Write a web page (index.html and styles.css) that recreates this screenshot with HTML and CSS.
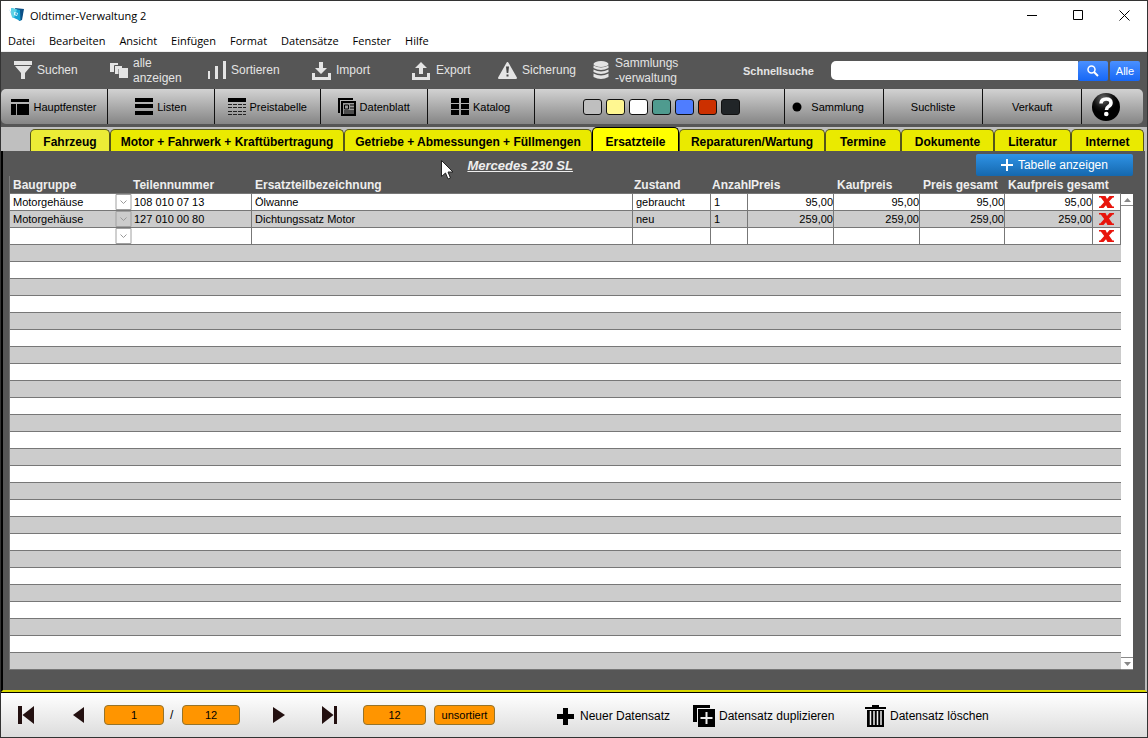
FILE: index.html
```html
<!DOCTYPE html>
<html lang="de">
<head>
<meta charset="utf-8">
<title>Oldtimer-Verwaltung 2</title>
<link rel="stylesheet" href="styles.css">
</head>
<body>
<svg width="0" height="0" class="defs" aria-hidden="true">
  <symbol id="x" viewBox="0 0 15 12"><path d="M0 0h6.500l1.500 3L10.500 0H15v1.500h-1.200L10 5.500l3.500 5H15V12H8.500L7 9.200 4.500 12H0v-1.500h1.200L5.200 6 1.800 1.500H0z" fill="#e8150c"/></symbol>
  <symbol id="chev" viewBox="0 0 16 16"><path d="M.5.500h15v15H.5z" fill="none" stroke="#a0a0a0"/><path d="M5 6.500l3 3 3-3" fill="none" stroke="#999"/></symbol>
</svg>
<div class="window">
  <header class="titlebar">
    <svg class="appicon" viewBox="0 0 16 16" width="16" height="16"><path d="M6 1l9 1-2 11-3 1z" fill="#0b4f86"/><path d="M0 2l4 9 1-1z" fill="#7ccbe8"/><path d="M2 1l9 2 .5 11L3 10z" fill="#16a4d4"/><path d="M2 1l6 1.500-3 8.500-2-1z" fill="#5bd3e6"/><path d="M5 5l4 1-1 3-3-1z" fill="#d8fbff"/><path d="M6.500 6l1.500.5-.5 1.500-1-.5z" fill="#1477b5"/></svg>
    <h1>Oldtimer-Verwaltung 2</h1>
    <button aria-label="Minimieren"><svg width="11" height="11"><path d="M0 5.500h10" stroke="#000"/></svg></button>
    <button aria-label="Maximieren"><svg width="11" height="11"><path d="M.5.500h9v9h-9z" fill="none" stroke="#000"/></svg></button>
    <button aria-label="Schließen"><svg width="11" height="11"><path d="M.5.500l10 10m0-10l-10 10" stroke="#000"/></svg></button>
  </header>
  <nav class="menubar">
    <button>Datei</button><button>Bearbeiten</button><button>Ansicht</button><button>Einfügen</button><button>Format</button><button>Datensätze</button><button>Fenster</button><button>Hilfe</button>
  </nav>

  <div class="app">
    <div class="toolbar">
      <button><svg width="18" height="19"><path d="M0 0h18v4H0zM1 5h16l-6 7v6H7v-6z" fill="#e4e4e4"/></svg><span>Suchen</span></button>
      <button><svg width="18" height="17"><path d="M0 1h8v3H4v6H0z" fill="#e4e4e4"/><path d="M4.500 3.500h8V7H9v5.500H4.500z" fill="#e4e4e4" stroke="#565656"/><path d="M9 6h9v10H9z" fill="#e4e4e4"/></svg><span>alle<br>anzeigen</span></button>
      <button><svg width="19" height="19"><path d="M1 10h2v8H1zM8 5h3v13H8zM16 0h3v18h-3z" fill="#e4e4e4"/></svg><span>Sortieren</span></button>
      <button><svg width="19" height="18"><path d="M0 11h3v4h13v-4h3v7H0zM7 0h4v6h4l-6 6-6-6h4z" fill="#e4e4e4"/></svg><span>Import</span></button>
      <button><svg width="19" height="18"><path d="M0 11h3v4h12v-4h3v7H0zM7 12V6H3l6-6 6 6h-4v6z" fill="#e4e4e4"/></svg><span>Export</span></button>
      <button><svg width="19" height="17"><path d="M9.500 1l8.500 15H1z" fill="#e4e4e4" stroke="#e4e4e4" stroke-width="2" stroke-linejoin="round"/><path d="M8 4.500h3l-.7 6.500H8.700zM8.500 12.500h2v2h-2z" fill="#454545"/></svg><span>Sicherung</span></button>
      <button class="db"><svg width="18" height="19"><g fill="#e4e4e4"><ellipse cx="9" cy="3" rx="7.500" ry="3"/><path d="M1.500 4.500q7.500 4 15 0v2.500q-7.500 4-15 0zM1.500 8.500q7.500 4 15 0V11q-7.500 4-15 0zM1.500 12.500q7.500 4 15 0v3.500q-7.500 4-15 0z"/></g></svg><span>Sammlungs<br>-verwaltung</span></button>
      <label for="quick">Schnellsuche</label>
      <form class="search">
        <input id="quick" type="text">
        <button type="button" class="blue" aria-label="Suchen"><svg width="12" height="12"><circle cx="4.500" cy="4.500" r="3.500" fill="none" stroke="#fff" stroke-width="1.500"/><path d="M7 7l4 4" stroke="#fff" stroke-width="2"/></svg></button>
        <button type="button" class="blue all">Alle</button>
      </form>
    </div>

    <div class="navbar">
      <button><svg width="18" height="16"><path d="M0 0h18v3H0zM0 5h5v11H0zM6 5h12v11H6z"/></svg>Hauptfenster</button>
      <button><svg width="18" height="17"><path d="M0 0h18v4H0zM0 6h18v4H0zM0 13h18v4H0z"/></svg>Listen</button>
      <button><svg width="18" height="18"><path d="M0 0h18v4H0z"/><path d="M0 6.500h18M0 9.500h18M0 13.500h18M0 16.500h18" stroke="#222" stroke-dasharray="4 1"/></svg>Preistabelle</button>
      <button><svg width="18" height="18"><path d="M1 15V1h14" fill="none" stroke="#000" stroke-width="2"/><path d="M4 4h13v13H4z" fill="#999" stroke="#000" stroke-width="2"/><path d="M6.500 7h4v4h-4zM12 7h4M12 10h4M6 13h10M6 15h10" fill="none" stroke="#000"/></svg>Datenblatt</button>
      <button><svg width="18" height="17"><path d="M0 0h8v5H0zM10 0h8v5h-8zM0 6h8v5H0zM10 6h8v5h-8zM0 12h8v5H0zM10 12h8v5h-8z"/></svg>Katalog</button>
      <div class="swatches">
        <button class="c1" aria-label="Grau"></button><button class="c2" aria-label="Gelb"></button><button class="c3" aria-label="Weiß"></button><button class="c4" aria-label="Grün"></button><button class="c5" aria-label="Blau"></button><button class="c6" aria-label="Rot"></button><button class="c7" aria-label="Schwarz"></button>
      </div>
      <button class="state"><svg width="10" height="10"><circle cx="5" cy="5" r="4.500"/></svg>Sammlung</button>
      <button>Suchliste</button>
      <button>Verkauft</button>
      <button class="help" aria-label="Hilfe"><svg width="28" height="28"><defs><radialGradient id="ball" cx=".4" cy=".2"><stop offset="0" stop-color="#666"/><stop offset=".7" stop-color="#111"/><stop offset="1" stop-color="#000"/></radialGradient></defs><circle cx="14" cy="14" r="14" fill="url(#ball)"/><path d="M9 10.500q.3-4.500 5.200-4.500 4.800 0 4.800 3.800 0 2.200-2.500 3.700-2 1.200-2 3.500" fill="none" stroke="#fff" stroke-width="3.600"/><circle cx="14.300" cy="21" r="2.300" fill="#fff"/></svg></button>
    </div>

    <div class="tabs" role="tablist">
      <button role="tab" class="first">Fahrzeug</button><button role="tab">Motor + Fahrwerk + Kraftübertragung</button><button role="tab">Getriebe + Abmessungen + Füllmengen</button><button role="tab" class="active" aria-selected="true">Ersatzteile</button><button role="tab">Reparaturen/Wartung</button><button role="tab">Termine</button><button role="tab">Dokumente</button><button role="tab">Literatur</button><button role="tab">Internet</button>
    </div>

    <main class="panel">
      <div class="heading">
        <h2>Mercedes 230 SL</h2>
        <button class="show"><svg width="12" height="12"><path d="M6 0v12M0 6h12" stroke="#fff" stroke-width="2"/></svg>Tabelle anzeigen</button>
      </div>
      <div class="grid">
        <table>
          <colgroup><col class="w-group"><col class="w-num"><col><col class="w-cond"><col class="w-qty"><col class="w-price"><col class="w-price"><col class="w-total"><col class="w-ktotal"><col class="w-del"></colgroup>
          <thead><tr><th>Baugruppe</th><th>Teilennummer</th><th>Ersatzteilbezeichnung</th><th>Zustand</th><th>Anzahl</th><th>Preis</th><th>Kaufpreis</th><th>Preis gesamt</th><th>Kaufpreis gesamt</th><th></th></tr></thead>
          <tbody>
            <tr><td><div class="combo"><select aria-label="Baugruppe"><option>Motorgehäuse</option></select><svg><use href="#chev"/></svg></div></td><td>108 010 07 13</td><td>Ölwanne</td><td>gebraucht</td><td>1</td><td class="n">95,00</td><td class="n">95,00</td><td class="n">95,00</td><td class="n">95,00</td><td><button aria-label="Zeile löschen"><svg><use href="#x"/></svg></button></td></tr>
            <tr><td><div class="combo"><select aria-label="Baugruppe"><option>Motorgehäuse</option></select><svg><use href="#chev"/></svg></div></td><td>127 010 00 80</td><td>Dichtungssatz Motor</td><td>neu</td><td>1</td><td class="n">259,00</td><td class="n">259,00</td><td class="n">259,00</td><td class="n">259,00</td><td><button aria-label="Zeile löschen"><svg><use href="#x"/></svg></button></td></tr>
            <tr><td><div class="combo"><select aria-label="Baugruppe"><option></option></select><svg><use href="#chev"/></svg></div></td><td></td><td></td><td></td><td></td><td></td><td></td><td></td><td></td><td><button aria-label="Zeile löschen"><svg><use href="#x"/></svg></button></td></tr>
            <tr><td colspan="10"></td></tr><tr><td colspan="10"></td></tr><tr><td colspan="10"></td></tr><tr><td colspan="10"></td></tr><tr><td colspan="10"></td></tr>
            <tr><td colspan="10"></td></tr><tr><td colspan="10"></td></tr><tr><td colspan="10"></td></tr><tr><td colspan="10"></td></tr><tr><td colspan="10"></td></tr>
            <tr><td colspan="10"></td></tr><tr><td colspan="10"></td></tr><tr><td colspan="10"></td></tr><tr><td colspan="10"></td></tr><tr><td colspan="10"></td></tr>
            <tr><td colspan="10"></td></tr><tr><td colspan="10"></td></tr><tr><td colspan="10"></td></tr><tr><td colspan="10"></td></tr><tr><td colspan="10"></td></tr>
            <tr><td colspan="10"></td></tr><tr><td colspan="10"></td></tr><tr><td colspan="10"></td></tr><tr><td colspan="10"></td></tr><tr><td colspan="10"></td></tr>
          </tbody>
        </table>
        <div class="scroll">
          <button aria-label="Nach oben"><svg width="7" height="4"><path d="M0 4l3.500-4L7 4z" fill="#888"/></svg></button>
          <button aria-label="Nach unten"><svg width="7" height="4"><path d="M0 0h7L3.500 4z" fill="#888"/></svg></button>
        </div>
      </div>
    </main>
  </div>

  <footer class="footer">
    <button aria-label="Erster"><svg width="17" height="18"><path d="M0 0h4v18H0zM16 0v18L4.500 9z" fill="#231010"/></svg></button>
    <button aria-label="Zurück"><svg width="12" height="18"><path d="M11 1v16L0 9z" fill="#231010"/></svg></button>
    <input class="pill" type="text" value="1" aria-label="Datensatz">
    <span class="slash">/</span>
    <output class="pill">12</output>
    <button class="next" aria-label="Weiter"><svg width="12" height="18"><path d="M0 1v16l12-8z" fill="#231010"/></svg></button>
    <button aria-label="Letzter"><svg width="17" height="18"><path d="M13 0h3v18h-3zM1 0v18l11.500-9z" fill="#231010"/></svg></button>
    <output class="pill">12</output>
    <output class="pill sort">unsortiert</output>
    <button class="act"><svg width="17" height="17"><path d="M6 0h5v6h6v5h-6v6H6v-6H0V6h6z"/></svg><span>Neuer Datensatz</span></button>
    <button class="act"><svg width="22" height="22"><path d="M0 0h17v3H4v14H0z"/><path d="M5 4h17v18H5z"/><path d="M13.500 7v12M7.500 13h12" stroke="#eee" stroke-width="2"/></svg><span>Datensatz duplizieren</span></button>
    <button class="act"><svg width="21" height="22"><path d="M0 2h7V0h7v2h7v2H0zM2 5h17v17H2z"/><path d="M5.500 6v14M9 6v14M12.500 6v14M16 6v14" stroke="#eee" stroke-width="1.500"/></svg><span>Datensatz löschen</span></button>
  </footer>
  <svg class="cursor" width="13" height="20"><path d="M.5.500v16l4-3.500 2.500 6 2.500-1-2.500-6h5z" fill="#fff" stroke="#222"/></svg>
</div>
</body>
</html>
```

FILE: styles.css
```css
* { box-sizing: border-box; }
body { margin: 0; background: #fff; font-family: "Liberation Sans", Arial, sans-serif; font-size: 12px; color: #000; }
button, input, select { font: inherit; color: inherit; margin: 0; padding: 0; border: 0; background: none; }
button { display: flex; align-items: center; text-align: left; white-space: nowrap; }
svg { display: block; flex: none; }
.defs { position: absolute; }
.window { position: relative; min-height: 100vh; display: flex; flex-direction: column; border: 1px solid #333; }

.titlebar { display: flex; align-items: center; height: 28px; padding-left: 8px; font-family: "Open Sans", "Noto Sans", sans-serif; }
.titlebar h1 { flex: 1; margin: 0 0 0 5px; font-size: 11px; font-weight: 400; }
.titlebar button { width: 46px; height: 28px; justify-content: center; }
.menubar { display: flex; gap: 14px; height: 23px; padding: 0 7px; border-bottom: 1px solid #eee; font-family: "Open Sans", "Noto Sans", sans-serif; font-size: 11px; }

.app { flex: 1; display: flex; flex-direction: column; background: #565656; border-bottom: 1px solid #000; }
.toolbar { display: grid; grid-template-columns: 96fr 97fr 105fr 100fr 86fr 94fr 151fr 88fr 309fr; align-items: center; height: 37px; padding: 0 7px 0 13px; color: #e4e4e4; }
.toolbar > button { gap: 5px; line-height: 15px; }
.toolbar label { font-size: 11px; font-weight: 700; }
.search { display: flex; height: 20px; }
.search input { flex: 1; min-width: 0; height: 19px; padding: 0 6px; background: #fff; border-radius: 5px 0 0 5px; color: #000; }
.blue { width: 30px; justify-content: center; border-radius: 2px; background: linear-gradient(#4a90ff, #1667f5); color: #fff; font-size: 11px; }
.all { margin-left: 2px; }

.navbar { display: grid; grid-template-columns: 107fr 107fr 106fr 107fr 107fr 251fr 99fr 99fr 99fr 61fr; height: 35px; margin-right: 4px; border-radius: 5px; background: linear-gradient(#d2d2d2, #858585); font-size: 11px; }
.navbar > * { border-right: 1px solid #111; }
.navbar > button { justify-content: center; gap: 4px; }
.navbar > .state { justify-content: flex-start; gap: 9px; padding-left: 7px; }
.navbar > .help { border: 0; justify-content: flex-start; padding-left: 10px; }
.swatches { display: flex; align-items: center; justify-content: center; gap: 4px; padding-left: 4px; }
.swatches button { width: 19px; height: 16px; border: 1px solid #111; border-radius: 3px; }
.c1 { background: #bfbfbf; } .c2 { background: #fff791; } .c3 { background: #fff; } .c4 { background: #4f9b8f; }
.c5 { background: #4f7dff; } .c6 { background: #cc3000; } .c7 { background: #212528; }

.tabs { display: grid; grid-template-columns: 80fr 234fr 248fr 87fr 146fr 76fr 93fr 77fr 73fr; align-items: end; height: 24px; margin-top: 3px; padding: 0 3px 0 29px; background: #bfbfbf; }
.tabs button { height: 22px; min-width: 0; justify-content: center; padding-top: 2px; border: 1px solid #55551a; border-bottom: 0; border-radius: 5px 5px 0 0; background: #eaea00; font-weight: 700; }
.tabs .first { background: #ecec36; }
.tabs .active { height: 24px; background: #ff0; border-color: #000; padding-top: 4px; }

.panel { flex: 1; padding: 3px 12px 19px 6px; border: solid; border-width: 0 2px 2px; border-color: #000 #bbb #d8d800 #000; }
.heading { display: grid; grid-template-columns: 458fr 508fr 157fr; align-items: center; height: 22px; }
.heading h2 { grid-column: 2; margin: 0; font-size: 13px; font-style: italic; font-weight: 700; text-decoration: underline; color: #eee; }
.show { height: 22px; justify-content: center; gap: 5px; border-radius: 2px; background: linear-gradient(#2f93e6, #1568ae); color: #fff; }
.grid { display: grid; grid-template-columns: 1fr 12px; }
table { width: 100%; table-layout: fixed; border-collapse: separate; border-spacing: 0; border-left: 1px solid #777; font-size: 11px; line-height: 16px; }
.w-group { width: 122px; } .w-num { width: 120px; } .w-cond { width: 78px; } .w-qty { width: 37px; }
.w-price { width: 86px; } .w-total { width: 85px; } .w-ktotal { width: 88px; } .w-del { width: 28px; }
th { height: 18px; padding: 0 0 0 3px; text-align: left; font-size: 12px; white-space: nowrap; color: #eee; }
th:nth-child(2), th:nth-child(4), th:nth-child(5) { padding-left: 1px; }
thead th { border-bottom: 1px solid #777; }
td { height: 17px; padding: 0 0 0 3px; border-right: 1px solid #777; border-bottom: 1px solid #777; white-space: nowrap; }
tbody tr { background: #fff; }
tbody tr:nth-child(even) { background: #ccc; }
td:first-child { padding: 0; border-right: 0; }
td:nth-child(2) { padding-left: 2px; }
td.n { padding: 0; text-align: right; }
td button { width: 100%; justify-content: center; padding-right: 3px; }
td button svg { width: 15px; height: 12px; }
.combo { display: grid; height: 16px; }
.combo select { grid-area: 1 / 1; appearance: none; padding-left: 3px; line-height: 16px; }
.combo svg { grid-area: 1 / 1; justify-self: end; width: 17px; height: 16px; pointer-events: none; }
.scroll { display: flex; flex-direction: column; justify-content: space-between; margin-top: 18px; background: #fff; border-bottom: 1px solid #888; }
.scroll button { height: 12px; justify-content: center; border-bottom: 1px solid #888; }
.scroll button:last-child { border-top: 1px solid #888; border-bottom: 0; }

.footer { display: grid; grid-template-columns: 55fr 31fr 60fr 18fr 58fr 81fr 42fr 63fr 69fr 62fr 136fr 172fr 282fr; align-items: center; height: 44px; padding-left: 17px; background: linear-gradient(#fff, #dcdcdc); }
.pill { height: 20px; width: 100%; min-width: 0; border: 1px solid #95742c; border-radius: 4px; background: #ff9500; font-size: 11px; line-height: 18px; text-align: center; }
.slash { padding-left: 6px; }
.next { padding-left: 33px; }
.sort { width: auto; margin-left: 8px; }
.act { gap: 4px; padding-top: 2px; }
.act:nth-of-type(5) { grid-column: 11; gap: 6px; }
.cursor { position: absolute; left: 440px; top: 159px; }
```
